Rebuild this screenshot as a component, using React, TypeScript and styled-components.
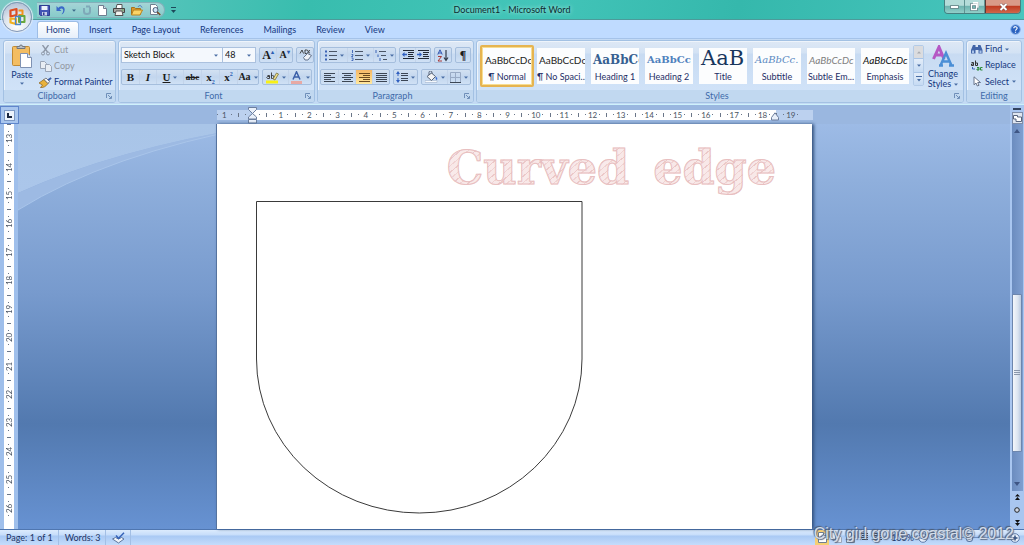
import React from "react";
import styled, { createGlobalStyle, css } from "styled-components";

const ui = `Lato, "Open Sans", sans-serif`;
const ink = "#15387f";

const GlobalStyle = createGlobalStyle`
  * { box-sizing: border-box; }
  body { margin: 0; font-family: ${ui}; font-size: 9px; line-height: 10px; color: ${ink}; }
  button, select, input { font: inherit; color: inherit; margin: 0; padding: 0; border: 0; background: none; }
  svg { display: block; flex: none; }
`;

const Window = styled.div`
  position: relative;
  display: flex;
  flex-direction: column;
  min-height: 100vh;
  overflow: hidden;
  background: #bfdbff;
`;

/* ---------- Title bar ---------- */
const TitleBar = styled.header`
  display: grid;
  grid-template-columns: 1fr auto 1fr;
  height: 20px;
  padding: 0 3px;
  background: linear-gradient(100deg, #7cc9c4 0, #52c3b9 16%, #38bdae 30%, #43c5b9 52%, #35b8ac 72%, #48c6be 100%);
  border-bottom: 1px solid #4d9a9a;
`;
const QuickAccess = styled.div`
  display: flex;
  align-items: center;
  height: 16px;
  margin-top: 2px;
  padding-left: 34px;
`;
const Pill = styled.div`
  display: flex;
  align-items: center;
  gap: 6px;
  width: 128px;
  height: 16px;
  padding-left: 2px;
  border: 1px solid #83b0ba;
  border-left: 0;
  border-radius: 0 8px 8px 0;
  background: linear-gradient(#a5d4d6, #87cbca);
`;
const IconButton = styled.button`
  display: flex;
  align-items: center;
  justify-content: center;
`;
const DocTitle = styled.h1`
  margin: 0;
  font-size: 9px;
  font-weight: 400;
  line-height: 20px;
  color: #0e2c30;
  text-shadow: 0 0 4px #c8f1ec;
`;
const Captions = styled.div`
  display: flex;
  justify-self: end;
  height: 14px;
  border: 1px solid #477f80;
  border-top: 0;
  border-radius: 0 0 4px 4px;
  overflow: hidden;
`;
const Caption = styled.button<{ $close?: boolean }>`
  display: flex;
  align-items: center;
  justify-content: center;
  width: ${(p) => (p.$close ? 35 : 20)}px;
  border-left: ${(p) => (p.$close ? "1px solid #5c3a35" : "0")};
  border-right: ${(p) => (p.$close ? "0" : "1px solid #5f9392")};
  background: ${(p) =>
    p.$close ? "linear-gradient(#d99a88 0 40%, #c03c22 50%, #d0674c)" : "linear-gradient(#b4dcd9 0 40%, #6fb4b0 50%, #92cfc9)"};
`;
const OfficeButton = styled.button`
  position: absolute;
  top: 2px;
  left: 2px;
  width: 30px;
  height: 30px;
  display: flex;
  align-items: center;
  justify-content: center;
  border: 1px solid #8497b5;
  border-radius: 50%;
  background: radial-gradient(circle at 50% 80%, #ffffff, #dfe6ee 45%, #b9c6d8 80%);
  box-shadow: 0 0 1px 1px #dfeaf6;
`;

/* ---------- Tabs ---------- */
const TabRow = styled.nav`
  display: flex;
  height: 18px;
  padding: 1px 3px 0 37px;
  background: #bfdbff;
`;
const Tab = styled.button<{ $active?: boolean }>`
  height: 17px;
  padding: 0 ${(p) => (p.$active ? 8 : 10)}px;
  line-height: 16px;
  ${(p) =>
    p.$active &&
    css`
      border: 1px solid #9dbde6;
      border-bottom: 0;
      border-radius: 3px 3px 0 0;
      background: linear-gradient(#ffffff, #e6effa);
    `}
`;
const Help = styled.button`
  align-self: center;
  margin-left: auto;
`;

/* ---------- Ribbon ---------- */
const Ribbon = styled.section`
  display: flex;
  gap: 2px;
  height: 67px;
  padding: 1px 2px 1px 3px;
  border-top: 1px solid #a5c3e9;
  border-bottom: 1px solid #cdf1fb;
  background: #c3daf4;
`;
const GroupBox = styled.section<{ $grow?: boolean; $w?: number }>`
  display: flex;
  flex-direction: column;
  flex: ${(p) => (p.$grow ? "1 1 0" : `0 0 ${p.$w}px`)};
  min-width: 0;
  border: 1px solid #a3c1e3;
  border-radius: 3px;
  background: linear-gradient(#dee8f5 0, #d3e2f4 12px, #c8dbf2 13px, #d3e5fa 100%);
  box-shadow: inset 1px 1px 0 #eef4fb;
`;
const GroupBody = styled.div<{ $pad?: string }>`
  display: flex;
  flex: 1;
  min-height: 0;
  padding: ${(p) => p.$pad ?? "0"};
`;
const GroupLabel = styled.div`
  display: flex;
  align-items: center;
  height: 12px;
  padding: 0 3px;
  background: #c1d8f0;
  color: #3e6aaa;
  border-radius: 0 0 2px 2px;
`;
const GroupName = styled.span`
  flex: 1;
  text-align: center;
`;

function Group(props: { name: string; w?: number; grow?: boolean; pad?: string; launcher?: boolean; children: React.ReactNode }) {
  return (
    <GroupBox $w={props.w} $grow={props.grow} aria-label={props.name}>
      <GroupBody $pad={props.pad}>{props.children}</GroupBody>
      <GroupLabel>
        <GroupName>{props.name}</GroupName>
        {props.launcher && (
          <button aria-label={`${props.name} options`}>
            <svg width="6" height="6" viewBox="0 0 6 6" fill="none" stroke="#6f8fb9">
              <path d="M.5 5V.5H5M2 2l3 3M5.500 3v2.500H3" />
            </svg>
          </button>
        )}
      </GroupLabel>
    </GroupBox>
  );
}

const PasteButton = styled.button`
  display: flex;
  flex-direction: column;
  align-items: center;
  gap: 2px;
  width: 34px;
  padding-top: 2px;
`;
const Stack = styled.div`
  display: flex;
  flex-direction: column;
`;
const Command = styled.button`
  display: flex;
  align-items: center;
  gap: 2px;
  height: 17px;
  white-space: nowrap;
  &:disabled { color: #9297a1; }
`;
const IconSlot = styled.span`
  display: flex;
  justify-content: center;
  width: 13px;
`;
const Rows = styled.div`
  display: flex;
  flex-direction: column;
  flex: 1;
  gap: 6px;
`;
const Row = styled.div`
  display: flex;
  gap: 3px;
`;
const Cluster = styled.div`
  display: flex;
  height: 16px;
  border: 1px solid #a5bedd;
  border-radius: 2px;
  background: linear-gradient(#d3e1f2, #c2d6ee 50%, #d0e1f5);
`;
const Tool = styled.button<{ $w: number; $on?: boolean }>`
  display: flex;
  align-items: center;
  justify-content: center;
  gap: 3px;
  width: ${(p) => p.$w}px;
  color: #1c1c1c;
  white-space: nowrap;
  & + & { border-left: 1px solid #c3d4ea; }
  ${(p) => p.$on && css`background: linear-gradient(#f6b868, #fbcf7c 50%, #ffe9a2);`}
`;
const Combo = styled.label<{ $w: number }>`
  display: flex;
  align-items: center;
  width: ${(p) => p.$w}px;
  height: 16px;
  padding-right: 4px;
  border: 1px solid #abc1de;
  background: #f4f8fd;
  & + & { margin-left: -4px; }
`;
const ComboSelect = styled.select`
  flex: 1;
  min-width: 0;
  height: 14px;
  padding-left: 2px;
  appearance: none;
  color: #111;
`;
const Glyph = styled.span<{ $size?: number; $bold?: boolean; $italic?: boolean; $line?: string }>`
  font-family: "Liberation Serif", serif;
  font-size: ${(p) => p.$size ?? 11}px;
  font-weight: ${(p) => (p.$bold ? 700 : 400)};
  font-style: ${(p) => (p.$italic ? "italic" : "normal")};
  text-decoration: ${(p) => p.$line ?? "none"};
  line-height: 12px;
  sub, sup { font-size: 6px; line-height: 0; color: #2b5db3; }
`;

const Arrow = ({ color = "#4a6ea5" }: { color?: string }) => (
  <svg width="4" height="3" viewBox="0 0 4 3">
    <path d="M0 .5h4L2 2.800z" fill={color} />
  </svg>
);

/* ---------- Styles gallery ---------- */
const Gallery = styled.div`
  display: flex;
  flex: 1;
  min-width: 0;
  height: 42px;
  overflow: hidden;
`;
const StyleCard = styled.button<{ $on?: boolean }>`
  display: flex;
  flex-direction: column;
  flex: 1 1 54px;
  min-width: 54px;
  max-width: 72px;
  overflow: hidden;
  border: 3px solid transparent;
  background: #fcfdfe;
  background-clip: padding-box;
  ${(p) =>
    p.$on &&
    css`
      border-color: #e6b450;
      border-width: 2px;
      padding: 1px;
      border-radius: 2px;
      box-shadow: inset 0 0 0 1px #f7dd92;
    `}
`;
const Preview = styled.span<{ $serif?: boolean; $size: number; $bold?: boolean; $italic?: boolean; $color: string }>`
  width: 100%;
  height: 24px;
  padding-left: 2px;
  overflow: hidden;
  text-align: left;
  white-space: nowrap;
  line-height: ${(p) => (p.$size > 16 ? 20 : 24)}px;
  font-family: ${(p) => (p.$serif ? `"DejaVu Serif", serif` : `Lato, sans-serif`)};
  font-size: ${(p) => p.$size}px;
  font-weight: ${(p) => (p.$bold ? 700 : 400)};
  font-style: ${(p) => (p.$italic ? "italic" : "normal")};
  color: ${(p) => p.$color};
`;
const StyleName = styled.span`
  width: 100%;
  height: 11px;
  text-align: center;
  white-space: nowrap;
  color: #1e2f66;
`;
const GalleryScroll = styled.div`
  display: flex;
  flex-direction: column;
  width: 11px;
  height: 41px;
  margin-left: 1px;
  border: 1px solid #b3cbe8;
  border-radius: 2px;
`;
const GalleryButton = styled.button`
  display: flex;
  flex: 1;
  align-items: center;
  justify-content: center;
  background: linear-gradient(#e3edf9, #c5daf3);
  &:first-child { background: #dbdcdf; }
  & + & { border-top: 1px solid #a9c4e6; }
`;
const ChangeStyles = styled.button`
  display: flex;
  flex-direction: column;
  align-items: center;
  width: 38px;
  gap: 2px;
`;
const Inline = styled.span`
  display: inline-flex;
  align-items: center;
  gap: 3px;
`;

/* ---------- Document area ---------- */
const Body = styled.div`
  display: flex;
  flex: 1;
`;
const Main = styled.main`
  display: flex;
  flex-direction: column;
  flex: 1;
  min-width: 0;
`;
const RulerRow = styled.div`
  display: flex;
  height: 19px;
  background: #9ab7e0;
`;
const TabSelector = styled.button`
  display: flex;
  align-items: center;
  justify-content: center;
  width: 19px;
  height: 18px;
  margin-top: 1px;
  border: 1px solid #5f86cb;
  background: #a9c6ee;
`;
const TabMark = styled.span`
  display: flex;
  align-items: center;
  justify-content: center;
  width: 11px;
  height: 11px;
  border: 1px solid #7e9ac6;
  background: #edf3fc;
`;
const RulerHolder = styled.div`
  position: relative;
  display: flex;
  flex: 1;
  justify-content: center;
  align-items: center;
`;
const Ruler = styled.div`
  position: relative;
  display: flex;
  width: 596px;
  height: 10px;
  background: linear-gradient(90deg, #bcd1ef 36px, #ffffff 36px 559px, #bcd1ef 559px);
`;
const Scale = styled.div<{ $vertical?: boolean }>`
  display: grid;
  flex: none;
  ${(p) =>
    p.$vertical
      ? css`
          grid-auto-rows: minmax(0, 1fr);
          height: 398px;
          margin-top: -3px;
        `
      : css`
          grid-auto-flow: column;
          grid-auto-columns: minmax(0, 1fr);
          width: 595px;
          margin-left: -10px;
        `}
`;
const RulerClip = styled.div`
  display: flex;
  width: 100%;
  overflow: hidden;
`;
const Unit = styled.div<{ $vertical?: boolean }>`
  display: grid;
  ${(p) => (p.$vertical ? "grid-template-rows" : "grid-template-columns")}: repeat(4, minmax(0, 1fr));
  & > span {
    display: flex;
    align-items: center;
    justify-content: center;
  }
`;
const Mark = styled.span<{ $long?: boolean; $vertical?: boolean }>`
  &::before {
    content: "";
    width: ${(p) => (p.$long && p.$vertical ? 4 : 1)}px;
    height: ${(p) => (p.$long && !p.$vertical ? 4 : 1)}px;
    background: #6a7688;
  }
`;
const Num = styled.span<{ $vertical?: boolean }>`
  font-size: 8px;
  line-height: 10px;
  color: #4a5463;
  ${(p) => p.$vertical && css`writing-mode: vertical-rl; transform: rotate(180deg);`}
`;
const Indent = styled.span<{ $x: number; $y: number }>`
  position: absolute;
  left: ${(p) => p.$x}px;
  top: ${(p) => p.$y}px;
`;
function Units({ labels, vertical }: { labels: string[]; vertical?: boolean }) {
  return (
    <Scale $vertical={vertical}>
      {labels.map((n, i) => (
        <Unit key={i} $vertical={vertical}>
          <Mark $long $vertical={vertical} />
          <Mark />
          <Num $vertical={vertical}>{n}</Num>
          <Mark />
        </Unit>
      ))}
    </Scale>
  );
}

const Area = styled.div`
  display: flex;
  flex: 1;
`;
const SideRuler = styled.div`
  display: flex;
  justify-content: center;
  width: 18px;
  padding-right: 1px;
  background: #9fbfeb;
`;
const SideTrack = styled.div`
  display: flex;
  flex-direction: column;
  width: 10px;
  height: 100%;
  overflow: hidden;
  background: #fff;
`;
const Desk = styled.div`
  position: relative;
  display: flex;
  flex: 1;
  justify-content: center;
  background: linear-gradient(#9dbbe6 0, #8fafdc 14%, #779acd 42%, #5279af 74%, #6792d2 100%);
`;
const Swoosh = styled.svg`
  position: absolute;
  top: 0;
  left: 0;
`;
const Paper = styled.article`
  position: relative;
  width: 596px;
  padding: 16px 36px 12px 39px;
  background: #fff;
  border-left: 1px solid #55739f;
  box-shadow: 2px 0 3px #34527e;
`;
const Headline = styled.h2`
  margin: 0;
  text-align: right;
  white-space: nowrap;
  font-family: "DejaVu Serif", serif;
  font-size: 46px;
  line-height: 56px;
  height: 61px;
  font-weight: 700;
  color: transparent;
  background: repeating-linear-gradient(140deg, #f9eaea 0 4px, #f0d3d3 4px 5px, #f8e8e8 5px 9px, #ecc9c9 9px 10px);
  background-clip: text;
  -webkit-background-clip: text;
  -webkit-text-stroke: 1px #e8bfc0;
`;
const Word = styled.span`
  & + & { margin-left: 8px; }
`;

/* ---------- Scroll bar ---------- */
const ScrollColumn = styled.aside`
  display: flex;
  flex-direction: column;
  align-items: center;
  width: 14px;
  padding-top: 3px;
  background: #a9c6f0;
`;
const SplitBar = styled.div`
  width: 8px;
  height: 2px;
  margin-bottom: 2px;
  background: #33435f;
`;
const RulerToggle = styled.button`
  width: 11px;
  height: 12px;
  display: flex;
  align-items: center;
  justify-content: center;
  border: 1px solid #7e8da8;
  background: #dfe6f0;
`;
const Track = styled.div`
  display: flex;
  flex-direction: column;
  align-items: center;
  flex: 1;
  width: 11px;
  padding: 5px 0;
  background: linear-gradient(90deg, #6b8cbf, #7f9fd0);
`;
const Space = styled.div<{ $n: number }>`
  flex: ${(p) => p.$n} 1 0;
`;
const Thumb = styled.div`
  display: flex;
  align-items: center;
  justify-content: center;
  flex: 157 1 0;
  width: 10px;
  border: 1px solid #6d86ad;
  border-radius: 1px;
  background: linear-gradient(90deg, #f4f7fb, #dbe4f0 60%, #b9c9e0);
`;
const Browse = styled.div`
  display: flex;
  flex-direction: column;
  align-items: center;
  justify-content: space-around;
  height: 38px;
`;

/* ---------- Status bar ---------- */
const StatusBar = styled.footer`
  display: flex;
  align-items: stretch;
  height: 16px;
  border-top: 1px solid #4f76b0;
  background: linear-gradient(#dcebfd 0, #c6ddfa 5px, #a9c9f4 6px, #c4dcfb 100%);
`;
const StatusItem = styled.button`
  display: flex;
  align-items: center;
  padding: 0 5px 0 6px;
  color: #1d3566;
  border-right: 1px solid #a3bfe5;
`;
const ViewSwitch = styled.div`
  display: flex;
  margin-left: auto;
`;
const ViewButton = styled.button<{ $on?: boolean }>`
  display: flex;
  align-items: center;
  justify-content: center;
  width: 14px;
  background: ${(p) => (p.$on ? "#f6cf73" : "transparent")};
`;
const ZoomBox = styled.div`
  display: flex;
  align-items: center;
  gap: 4px;
  padding: 0 4px 0 6px;
  color: #1d3566;
`;
const ZoomSlider = styled.input`
  width: 74px;
  height: 12px;
  appearance: none;
  background: linear-gradient(#6f8fc0, #6f8fc0) center / 100% 1px no-repeat;
  &::-webkit-slider-thumb {
    appearance: none;
    width: 7px;
    height: 9px;
    border: 1px solid #56719c;
    border-radius: 1px 1px 4px 4px;
    background: #e8f0fb;
  }
`;
const Watermark = styled.div`
  position: absolute;
  right: 10px;
  bottom: 0;
  font-family: "Liberation Sans", sans-serif;
  font-size: 16px;
  line-height: 22px;
  color: #d3dce8;
  text-shadow: -1px -1px 1px #4c5a70, 1px 1px 1px #5c6c86;
  pointer-events: none;
`;

/* ---------- Icons ---------- */
const Disk = () => (
  <svg width="11" height="11" viewBox="0 0 11 11">
    <path d="M.5.5h10v10h-9l-1-1z" fill="#4355b5" stroke="#2f3c92" />
    <path d="M2.500 1h6v4h-6z" fill="#edf2fb" />
    <path d="M3 7h5v3.500H3z" fill="#c8d0ea" />
    <path d="M4 7.500h1.500V10H4z" fill="#2f3c92" />
  </svg>
);
const Undo = ({ color = "#3a68c8" }: { color?: string }) => (
  <svg width="10" height="10" viewBox="0 0 10 10">
    <path d="M.5 1v5h5L3.600 4.300C5.500 2.500 8 3.500 7 7l-1.500 2.500C10 7.500 9.500 1 5.500 1.200 4 1.300 3 2 2.300 2.900z" fill={color} />
  </svg>
);
const Redo = () => (
  <svg width="10" height="10" viewBox="0 0 10 10" fill="none" stroke="#7fa9b8" strokeWidth="2">
    <path d="M2 3v3.500a3 2.500 0 0 0 6 0V2M4 1.500h4" />
  </svg>
);
const Sheet = () => (
  <svg width="9" height="11" viewBox="0 0 9 11">
    <path d="M.5.5h5l3 3v7h-8z" fill="#fff" stroke="#6f7e90" />
    <path d="M5.500.5v3h3" fill="#d7dfe9" stroke="#6f7e90" />
  </svg>
);
const Printer = () => (
  <svg width="12" height="12" viewBox="0 0 12 12">
    <path d="M4 .5h5v4H3z" fill="#fff" stroke="#555" />
    <path d="M.5 4.500h11v4h-11z" fill="#aaa9a4" stroke="#444" />
    <path d="M3 7h6l1 4.500H2z" fill="#f3f3f0" stroke="#555" />
    <path d="M9 5.500h1.500v1H9z" fill="#48b348" />
  </svg>
);
const Folder = () => (
  <svg width="12" height="11" viewBox="0 0 12 11">
    <path d="M.5 9.500v-7h3l1 1h5v6z" fill="#d99a2f" stroke="#a7711c" />
    <path d="M.5 10l2-5h9l-2.500 5z" fill="#fbd467" stroke="#b8821f" />
    <path d="M7 2c1-2 3-2 4 .5" fill="none" stroke="#4d7ac4" />
  </svg>
);
const Magnify = () => (
  <svg width="12" height="12" viewBox="0 0 12 12">
    <path d="M1.500.5h5l2 2v8h-7z" fill="#fff" stroke="#6f7e90" />
    <circle cx="6.500" cy="6" r="2.500" fill="#cfe4f6" stroke="#4c5d78" />
    <path d="M8.300 8l3 3" stroke="#7b4a22" strokeWidth="1.500" />
  </svg>
);
const OfficeLogo = () => (
  <svg width="20" height="20" viewBox="0 0 20 20" fill="none" strokeLinejoin="round">
    <path d="M3.500 3.500l6-1.500v6l-6 1.500z" stroke="#dd4f22" strokeWidth="2.200" />
    <path d="M11.500 3.500h4v4.500h-4" stroke="#f0921c" strokeWidth="2" />
    <path d="M3.500 11.500l5.500.5v5l-5.500-1.500z" stroke="#f2b01e" strokeWidth="2.200" />
    <path d="M12 9h5.500v6H12z" stroke="#68a83c" strokeWidth="2" />
    <path d="M8.500 9.500h5v8h-5z" stroke="#4a86cc" strokeWidth="1.300" />
  </svg>
);
const Clipboard = () => (
  <svg width="22" height="24" viewBox="0 0 22 24">
    <rect x="1.500" y="2.500" width="17" height="19" rx="1" fill="#f3bd62" stroke="#c08a34" />
    <path d="M6 4.500V2.500h2.500a1.500 1.500 0 0 1 3 0H14v2z" fill="#b9bec6" stroke="#70767f" />
    <path d="M9.500 9.500h7l4 4v10h-11z" fill="#fff" stroke="#7f92b3" />
    <path d="M16.500 9.500v4h4" fill="#dfe7f3" stroke="#7f92b3" />
  </svg>
);
const Scissors = () => (
  <svg width="9" height="11" viewBox="0 0 9 11" fill="none" stroke="#8b95a5">
    <path d="M1.500 0l5 7M7.500 0l-5 7" strokeWidth="1.300" />
    <circle cx="2" cy="8.500" r="1.500" />
    <circle cx="7" cy="8.500" r="1.500" />
  </svg>
);
const CopyIcon = () => (
  <svg width="12" height="11" viewBox="0 0 12 11" fill="#e8edf4" stroke="#9aa5b7">
    <path d="M.5.5h4l2 2v5h-6z" />
    <path d="M5.500 3.500h4l2 2v5h-6z" />
  </svg>
);
const Brush = () => (
  <svg width="13" height="11" viewBox="0 0 13 11">
    <path d="M0 6l5-3.500 4 4C7 9.500 4 11 1.500 10.500L3.500 8z" fill="#e9b23c" stroke="#8a5f18" strokeWidth=".7" />
    <path d="M5 2.500L7 1l3.500 3.500L9 6.500z" fill="#f5f5f5" stroke="#555" strokeWidth=".7" />
    <path d="M8.500 2.500L11.500.3 12.700 1.500 10 4z" fill="#3c5ea8" />
  </svg>
);
const Eraser = () => (
  <svg width="13" height="12" viewBox="0 0 13 12">
    <path d="M1 4.500L3 1l1.500 3.500M6 1v3.500h1.500a1 1 0 0 0 0-3.500zM11 1.500C9.500 1 9 4 11 4" fill="none" stroke="#333" strokeWidth=".9" />
    <path d="M4.500 8.500l4-4 4 2-3.500 4.500H6z" fill="#eef1f6" stroke="#66758d" />
  </svg>
);
const Highlighter = () => (
  <svg width="13" height="13" viewBox="0 0 13 13">
    <path d="M0 9.500h12v3H0z" fill="#f7f018" />
    <path d="M1.500 4.500h2v3h-2a1.200 1.200 0 0 1 0-2h2M5.500 1.500v6h1a1.500 1.500 0 0 0 0-3h-1" fill="none" stroke="#333" strokeWidth=".9" />
    <path d="M7 8l3.500-6 2 1L9 9z" fill="#f0e08a" stroke="#6c6330" strokeWidth=".7" />
  </svg>
);
const FontColor = () => (
  <svg width="12" height="13" viewBox="0 0 12 13">
    <path d="M0 10h11v3H0z" fill="#e8a9a4" />
    <path d="M2 8.500L5.500.8 9 8.500M3.300 6h4.400" fill="none" stroke="#3b5fa8" strokeWidth="1.500" />
  </svg>
);
const Lines = ({ rows, color = "#3c4655" }: { rows: [number, number][]; color?: string }) => (
  <svg width="11" height="9" viewBox="0 0 11 9" stroke={color}>
    {rows.map(([a, b], i) => (
      <path key={i} d={`M${a} ${i * 2 + 0.5}H${b}`} />
    ))}
  </svg>
);
const ListIcon = ({ kind }: { kind: "dots" | "nums" | "multi" }) => (
  <svg width="12" height="11" viewBox="0 0 12 11">
    {kind === "multi" ? (
      <path d="M4 1.500h7M6 5.500h5M8 9.500h4" stroke="#4a5566" />
    ) : (
      <path d="M4 1.500h8M4 5.500h8M4 9.500h8" stroke="#4a5566" />
    )}
    {kind === "dots" && <path d="M0 .5h2v2H0zM0 4.500h2v2H0zM0 8.500h2v2H0z" fill="#3b62b5" />}
    {kind === "nums" && <path d="M1.500 0v3M.5 4.500h1.500v1L.5 6.500H2M.5 8h1.500v2.500H.5" fill="none" stroke="#3b62b5" strokeWidth=".9" />}
    {kind === "multi" && <path d="M1 0v3M3 4.500v2.500M5 8v3" stroke="#3b62b5" />}
  </svg>
);
const IndentIcon = ({ flip }: { flip?: boolean }) => (
  <svg width="12" height="10" viewBox="0 0 12 10">
    <path d="M1 .5h11M6 2.500h6M6 4.500h5M6 6.500h6M1 8.500h11" stroke="#222a36" />
    <path d={flip ? "M5 4.500L2.500 2v1.800H0v1.500h2.500V7z" : "M0 4.500L2.500 2v1.800H5v1.500H2.500V7z"} fill="#2f5fc0" />
  </svg>
);
const SortIcon = () => (
  <svg width="12" height="13" viewBox="0 0 12 13" fill="none">
    <path d="M.8 5.500L3 .8l2.200 4.700M1.500 4h3" stroke="#3056b0" />
    <path d="M1 7.500h3.500l-3.500 4.500h4" stroke="#a83a3a" />
    <path d="M9 1v10M7 8.500L9 11.500l2-3" stroke="#333b4a" strokeWidth="1.200" />
  </svg>
);
const SpacingIcon = () => (
  <svg width="12" height="12" viewBox="0 0 12 12">
    <path d="M5 2.500h7M5 4.500h7M5 7.500h7M5 9.500h7" stroke="#3c4655" />
    <path d="M2 0l2 3H0zM2 12L0 9h4zM1.500 3h1v2h-1zM1.500 7h1v2h-1z" fill="#2f5fc0" />
  </svg>
);
const Bucket = () => (
  <svg width="13" height="12" viewBox="0 0 13 12">
    <path d="M0 9.500h12v2H0z" fill="#f5f8fc" stroke="#9fb2cd" strokeWidth=".6" />
    <path d="M2 5.500L6.500 2l4 3.500-4 4z" fill="#f5f5f5" stroke="#586579" />
    <path d="M4 4V1.500a1.500 1.500 0 0 1 3 0V3" fill="none" stroke="#586579" />
    <path d="M10.500 5.500c2 1 2 2 1.500 3.500-1 0-1.500-1-1.500-3.500" fill="#3d6ed0" />
  </svg>
);
const BorderIcon = () => (
  <svg width="11" height="11" viewBox="0 0 11 11" fill="none">
    <path d="M.5.5h10v10H.5zM5.500.5v10M.5 5.500h10" stroke="#98aac5" />
    <path d="M0 10.500h11" stroke="#3c4655" />
  </svg>
);
const ChangeIcon = () => (
  <svg width="22" height="22" viewBox="0 0 22 22" fill="none">
    <path d="M1.500 14L7 2l5 12M3.500 10h7" stroke="#b558c4" strokeWidth="3" />
    <path d="M8.500 20.500L14 8l5.500 12.500M10.500 16.500h7M7 20.500h4M17 20.500h5" stroke="#4b8fd6" strokeWidth="2.500" />
  </svg>
);
const Binoculars = () => (
  <svg width="12" height="10" viewBox="0 0 12 10" fill="#4265a8">
    <path d="M2 1h2.500v2h2.500V1h2.500l2 5v3.500h-4V6h-3v3.500H0V6z" />
    <path d="M1 6.500h2V9H1zM8.500 6.500h2V9h-2z" fill="#a9c3ea" />
  </svg>
);
const ReplaceIcon = () => (
  <svg width="12" height="11" viewBox="0 0 12 11" fill="none">
    <path d="M.5 2.500h2v3h-2V4h2M4.500.5v5h2v-2.500h-2" stroke="#333" />
    <path d="M6 7.500h2V10H6V9h2M11.500 7.500h-2V10h2" stroke="#2c8a38" />
    <path d="M1.500 7v2h2.500" stroke="#3d65b5" />
  </svg>
);
const Pointer = () => (
  <svg width="8" height="11" viewBox="0 0 8 11">
    <path d="M1 .8v8l2-1.800 1.300 3L6 9.300 4.700 6.500H7.500z" fill="#fff" stroke="#5b6880" strokeWidth=".9" />
  </svg>
);
const ProofIcon = () => (
  <svg width="13" height="12" viewBox="0 0 13 12">
    <path d="M.5 7l3-1.500 3 1.500 3-1.500L12 7l-5.500 4z" fill="#f0f4fa" stroke="#5f769c" />
    <path d="M4 3.500L6.500 6.500 12 .8" fill="none" stroke="#3562b8" strokeWidth="1.500" />
  </svg>
);

const gallery = [
  { name: "¶ Normal", sample: "AaBbCcDc", size: 10, color: "#222", on: true },
  { name: "¶ No Spaci...", sample: "AaBbCcDc", size: 10, color: "#222" },
  { name: "Heading 1", sample: "AaBbCc", size: 12, color: "#365f91", serif: true, bold: true },
  { name: "Heading 2", sample: "AaBbCc", size: 10, color: "#4f81bd", serif: true, bold: true },
  { name: "Title", sample: "AaB", size: 21, color: "#17365d", serif: true },
  { name: "Subtitle", sample: "AaBbCc.", size: 10, color: "#5b8ac2", serif: true, italic: true },
  { name: "Subtle Em...", sample: "AaBbCcDc", size: 10, color: "#808080", italic: true },
  { name: "Emphasis", sample: "AaBbCcDc", size: 10, color: "#111", italic: true },
];

const across = ["1", "", ...Array.from({ length: 19 }, (_, i) => String(i + 1))];
const down = Array.from({ length: 14 }, (_, i) => String(i + 13));

export default function App() {
  return (
    <>
      <GlobalStyle />
      <Window>
        <TitleBar>
          <QuickAccess>
            <Pill>
              <IconButton aria-label="Save"><Disk /></IconButton>
              <IconButton aria-label="Undo"><Undo /></IconButton>
              <IconButton aria-label="Undo history"><Arrow color="#3d6a8a" /></IconButton>
              <IconButton aria-label="Redo"><Redo /></IconButton>
              <IconButton aria-label="New"><Sheet /></IconButton>
              <IconButton aria-label="Print"><Printer /></IconButton>
              <IconButton aria-label="Open"><Folder /></IconButton>
              <IconButton aria-label="Print preview"><Magnify /></IconButton>
            </Pill>
            <IconButton aria-label="Customize toolbar">
              <svg width="16" height="7" viewBox="0 0 16 7">
                <path d="M6 .5h5" stroke="#1c4a5a" />
                <path d="M6 3h5L8.500 6z" fill="#1c4a5a" />
              </svg>
            </IconButton>
          </QuickAccess>
          <DocTitle>Document1 - Microsoft Word</DocTitle>
          <Captions>
            <Caption aria-label="Minimize">
              <svg width="9" height="4" viewBox="0 0 9 4"><path d="M.5.5h8v3h-8z" fill="#fff" stroke="#4b6b70" strokeWidth=".7" /></svg>
            </Caption>
            <Caption aria-label="Restore">
              <svg width="9" height="9" viewBox="0 0 9 9" fill="none">
                <path d="M3 .8h5v5M1.500 2.500h5v5h-5z" stroke="#4b6b70" strokeWidth="2.600" />
                <path d="M3 .8h5v5M1.500 2.500h5v5h-5z" stroke="#fff" strokeWidth="1.400" />
              </svg>
            </Caption>
            <Caption $close aria-label="Close">
              <svg width="9" height="8" viewBox="0 0 9 8">
                <path d="M1.500 1l6 6M7.500 1l-6 6" stroke="#6b4444" strokeWidth="3" />
                <path d="M1.500 1l6 6M7.500 1l-6 6" stroke="#fff" strokeWidth="2" />
              </svg>
            </Caption>
          </Captions>
        </TitleBar>
        <OfficeButton aria-label="Office menu"><OfficeLogo /></OfficeButton>

        <TabRow>
          <Tab $active>Home</Tab>
          <Tab>Insert</Tab>
          <Tab>Page Layout</Tab>
          <Tab>References</Tab>
          <Tab>Mailings</Tab>
          <Tab>Review</Tab>
          <Tab>View</Tab>
          <Help aria-label="Help">
            <svg width="11" height="11" viewBox="0 0 11 11">
              <circle cx="5.500" cy="5.500" r="4.800" fill="#2b63c0" stroke="#8fb4ea" />
              <path d="M3.800 4.300c0-2.200 3.500-2 3.300 0C7 5.500 5.500 5.300 5.500 6.800M5.500 7.800v1" fill="none" stroke="#fff" strokeWidth="1.200" />
            </svg>
          </Help>
        </TabRow>

        <Ribbon>
          <Group name="Clipboard" w={113} launcher pad="1px 1px 0">
            <PasteButton>
              <Clipboard />
              <span>Paste</span>
              <Arrow />
            </PasteButton>
            <Stack>
              <Command disabled><IconSlot><Scissors /></IconSlot>Cut</Command>
              <Command disabled><IconSlot><CopyIcon /></IconSlot>Copy</Command>
              <Command><IconSlot><Brush /></IconSlot>Format Painter</Command>
            </Stack>
          </Group>

          <Group name="Font" w={197} launcher pad="6px 2px 0">
            <Rows>
              <Row>
                <Combo $w={102}>
                  <ComboSelect aria-label="Font"><option>Sketch Block</option></ComboSelect>
                  <Arrow />
                </Combo>
                <Combo $w={34}>
                  <ComboSelect aria-label="Font size"><option>48</option></ComboSelect>
                  <Arrow />
                </Combo>
                <Cluster>
                  <Tool $w={16} aria-label="Grow font"><Glyph $size={12} $bold>A<sup>▴</sup></Glyph></Tool>
                  <Tool $w={16} aria-label="Shrink font"><Glyph $size={10} $bold>A<sup>▾</sup></Glyph></Tool>
                </Cluster>
                <Cluster><Tool $w={16} aria-label="Clear formatting"><Eraser /></Tool></Cluster>
              </Row>
              <Row>
                <Cluster>
                  <Tool $w={17} aria-label="Bold"><Glyph $bold>B</Glyph></Tool>
                  <Tool $w={17} aria-label="Italic"><Glyph $bold $italic>I</Glyph></Tool>
                  <Tool $w={27} aria-label="Underline"><Glyph $bold $line="underline">U</Glyph><Arrow /></Tool>
                  <Tool $w={18} aria-label="Strikethrough"><Glyph $size={9} $bold $line="line-through">abc</Glyph></Tool>
                  <Tool $w={18} aria-label="Subscript"><Glyph $bold>x<sub>2</sub></Glyph></Tool>
                  <Tool $w={18} aria-label="Superscript"><Glyph $bold>x<sup>2</sup></Glyph></Tool>
                  <Tool $w={21} aria-label="Change case"><Glyph $size={10} $bold>Aa</Glyph><Arrow /></Tool>
                </Cluster>
                <Cluster>
                  <Tool $w={25} aria-label="Highlight"><Highlighter /><Arrow /></Tool>
                  <Tool $w={23} aria-label="Font colour"><FontColor /><Arrow /></Tool>
                </Cluster>
              </Row>
            </Rows>
          </Group>

          <Group name="Paragraph" w={157} launcher pad="6px 2px 0">
            <Rows>
              <Row>
                <Cluster>
                  <Tool $w={26} aria-label="Bullets"><ListIcon kind="dots" /><Arrow /></Tool>
                  <Tool $w={26} aria-label="Numbering"><ListIcon kind="nums" /><Arrow /></Tool>
                  <Tool $w={22} aria-label="Multilevel list"><ListIcon kind="multi" /><Arrow /></Tool>
                </Cluster>
                <Cluster>
                  <Tool $w={15} aria-label="Decrease indent"><IndentIcon /></Tool>
                  <Tool $w={15} aria-label="Increase indent"><IndentIcon flip /></Tool>
                </Cluster>
                <Cluster><Tool $w={16} aria-label="Sort"><SortIcon /></Tool></Cluster>
                <Cluster><Tool $w={14} aria-label="Show marks"><Glyph $size={12} $bold>¶</Glyph></Tool></Cluster>
              </Row>
              <Row>
                <Cluster>
                  <Tool $w={17} aria-label="Align left"><Lines rows={[[0, 11], [0, 7], [0, 11], [0, 7], [0, 11]]} /></Tool>
                  <Tool $w={17} aria-label="Centre"><Lines rows={[[0, 11], [2, 9], [0, 11], [2, 9], [0, 11]]} /></Tool>
                  <Tool $w={17} $on aria-label="Align right"><Lines color="#6b4a20" rows={[[0, 11], [4, 11], [0, 11], [4, 11], [0, 11]]} /></Tool>
                  <Tool $w={17} aria-label="Justify"><Lines rows={[[0, 11], [0, 11], [0, 11], [0, 11], [0, 11]]} /></Tool>
                </Cluster>
                <Cluster><Tool $w={23} aria-label="Line spacing"><SpacingIcon /><Arrow /></Tool></Cluster>
                <Cluster>
                  <Tool $w={25} aria-label="Shading"><Bucket /><Arrow /></Tool>
                  <Tool $w={23} aria-label="Borders"><BorderIcon /><Arrow /></Tool>
                </Cluster>
              </Row>
            </Rows>
          </Group>

          <Group name="Styles" grow launcher pad="4px 1px 0 3px">
            <Gallery>
              {gallery.map((s) => (
                <StyleCard key={s.name} $on={s.on}>
                  <Preview $serif={s.serif} $size={s.size} $bold={s.bold} $italic={s.italic} $color={s.color}>
                    {s.sample}
                  </Preview>
                  <StyleName>{s.name}</StyleName>
                </StyleCard>
              ))}
            </Gallery>
            <GalleryScroll>
              <GalleryButton aria-label="Previous styles">
                <svg width="4" height="3" viewBox="0 0 4 3"><path d="M0 2.500h4L2 .2z" fill="#a9abb0" /></svg>
              </GalleryButton>
              <GalleryButton aria-label="Next styles"><Arrow /></GalleryButton>
              <GalleryButton aria-label="More styles">
                <svg width="6" height="6" viewBox="0 0 6 6"><path d="M0 0h6v1H0zM1 3h4L3 5.500z" fill="#4a6ea5" /></svg>
              </GalleryButton>
            </GalleryScroll>
            <ChangeStyles>
              <ChangeIcon />
              <span>Change<br /><Inline>Styles <Arrow /></Inline></span>
            </ChangeStyles>
          </Group>

          <Group name="Editing" w={56} pad="0 0 0 3px">
            <Stack>
              <Command><IconSlot><Binoculars /></IconSlot><Inline>Find <Arrow /></Inline></Command>
              <Command><IconSlot><ReplaceIcon /></IconSlot>Replace</Command>
              <Command><IconSlot><Pointer /></IconSlot><Inline>Select <Arrow /></Inline></Command>
            </Stack>
          </Group>
        </Ribbon>

        <Body>
          <Main>
            <RulerRow>
              <TabSelector aria-label="Tab type">
                <TabMark>
                  <svg width="5" height="5" viewBox="0 0 5 5"><path d="M1 0v4h4" fill="none" stroke="#1b2740" strokeWidth="2" /></svg>
                </TabMark>
              </TabSelector>
              <RulerHolder>
                <Ruler>
                  <RulerClip><Units labels={across} /></RulerClip>
                  <Indent $x={31} $y={-3}>
                    <svg width="9" height="17" viewBox="0 0 9 17" fill="#e9f0fa" stroke="#6c7f9e">
                      <path d="M.5.5h8v2l-4 4-4-4zM4.500 6.500l4 3.500v2h-8v-2zM.5 12.500h8v3.500h-8z" />
                    </svg>
                  </Indent>
                  <Indent $x={554} $y={2}>
                    <svg width="8" height="9" viewBox="0 0 8 9" fill="#e9f0fa" stroke="#6c7f9e">
                      <path d="M4 .8l3.500 4.700v2.500h-7V5.500z" />
                    </svg>
                  </Indent>
                </Ruler>
              </RulerHolder>
            </RulerRow>
            <Area>
              <SideRuler><SideTrack><Units labels={down} vertical /></SideTrack></SideRuler>
              <Desk>
                <Swoosh width="600" height="90" viewBox="0 0 600 90">
                  <defs>
                    <linearGradient id="glow" x1="0" y1="0" x2="0" y2="1">
                      <stop offset="0" stopColor="#a9c5e8" />
                      <stop offset="1" stopColor="#abc6ea" />
                    </linearGradient>
                  </defs>
                  <path d="M0 0H240V2Q100 24 0 69z" fill="url(#glow)" />
                  <path d="M0 69Q100 24 240 2Q90 30 0 86z" fill="#9dbae3" />
                  <path d="M0 86Q90 30 240 2" fill="none" stroke="#a9c5ea" />
                </Swoosh>
                <Paper>
                  <Headline><Word>Curved</Word> <Word>edge</Word></Headline>
                  <svg width="327" height="314" viewBox="0 0 327 314" role="img" aria-label="Rectangle with a curved lower edge">
                    <path d="M.5.5h325.500V158A162.750 154 0 0 1 .5 158z" fill="none" stroke="#3a3a3a" />
                  </svg>
                </Paper>
              </Desk>
            </Area>
          </Main>
          <ScrollColumn>
            <SplitBar />
            <RulerToggle aria-label="View ruler">
              <svg width="9" height="8" viewBox="0 0 9 8" fill="#fff" stroke="#55637c"><path d="M.5 1.500h4v1.500h4v4.500H3V5H.5z" /></svg>
            </RulerToggle>
            <Track>
              <svg width="6" height="4" viewBox="0 0 6 4"><path d="M0 4h6L3 0z" fill="#3f5685" /></svg>
              <Space $n={161} />
              <Thumb>
                <svg width="6" height="6" viewBox="0 0 6 6" stroke="#8a97ab"><path d="M0 .5h6M0 2.500h6M0 4.500h6" /></svg>
              </Thumb>
              <Space $n={30} />
              <svg width="6" height="4" viewBox="0 0 6 4"><path d="M0 0h6L3 4z" fill="#3f5685" /></svg>
            </Track>
            <Browse>
              <IconButton aria-label="Previous page">
                <svg width="5" height="6" viewBox="0 0 5 6"><path d="M2.500 0L5 2.500H0zM2.500 3L5 6H0z" fill="#111" /></svg>
              </IconButton>
              <IconButton aria-label="Browse object">
                <svg width="6" height="6" viewBox="0 0 6 6"><circle cx="3" cy="3" r="2.300" fill="#cfd8e6" stroke="#222" /></svg>
              </IconButton>
              <IconButton aria-label="Next page">
                <svg width="5" height="6" viewBox="0 0 5 6"><path d="M2.500 3L5 0H0zM2.500 6L5 3H0z" fill="#111" /></svg>
              </IconButton>
            </Browse>
          </ScrollColumn>
        </Body>

        <StatusBar>
          <StatusItem>Page: 1 of 1</StatusItem>
          <StatusItem>Words: 3</StatusItem>
          <StatusItem aria-label="Proofing"><ProofIcon /></StatusItem>
          <ViewSwitch>
            <ViewButton $on aria-label="Print layout"><Sheet /></ViewButton>
            <ViewButton aria-label="Full screen reading"><CopyIcon /></ViewButton>
            <ViewButton aria-label="Web layout"><Sheet /></ViewButton>
            <ViewButton aria-label="Outline"><Lines rows={[[0, 9], [3, 9], [0, 9], [3, 9]]} /></ViewButton>
            <ViewButton aria-label="Draft"><Lines rows={[[0, 9], [0, 9], [0, 9], [0, 9]]} /></ViewButton>
          </ViewSwitch>
          <ZoomBox>
            <span>100%</span>
            <IconButton aria-label="Zoom out">
              <svg width="10" height="10" viewBox="0 0 10 10"><circle cx="5" cy="5" r="4.300" fill="#e8f0fb" stroke="#5f7ba8" /><path d="M2.500 5h5" stroke="#33507f" strokeWidth="1.500" /></svg>
            </IconButton>
            <ZoomSlider type="range" min={0} max={100} defaultValue={50} aria-label="Zoom" />
            <IconButton aria-label="Zoom in">
              <svg width="10" height="10" viewBox="0 0 10 10"><circle cx="5" cy="5" r="4.300" fill="#e8f0fb" stroke="#5f7ba8" /><path d="M2.500 5h5M5 2.500v5" stroke="#33507f" strokeWidth="1.500" /></svg>
            </IconButton>
          </ZoomBox>
        </StatusBar>
        <Watermark>City girl gone coastal© 2012</Watermark>
      </Window>
    </>
  );
}
